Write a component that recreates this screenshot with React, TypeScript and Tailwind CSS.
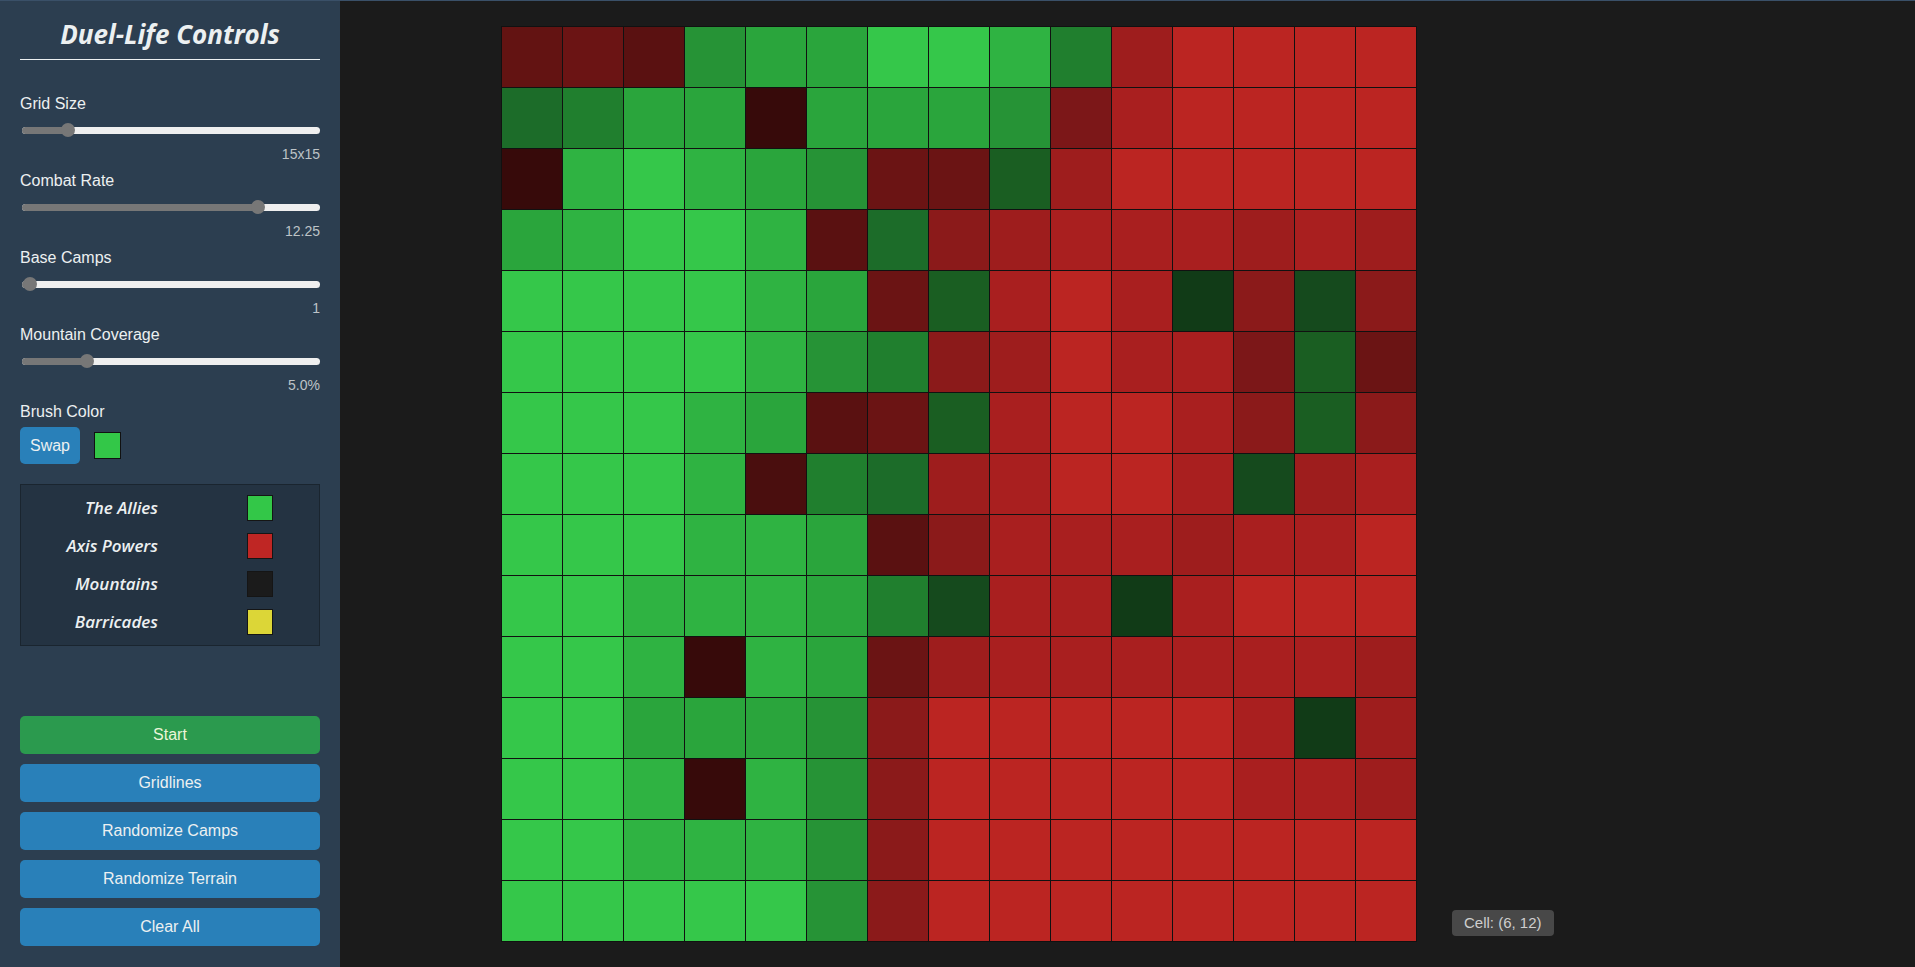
import React from "react";

// palette: upper case = allies (green shades), lower case = axis (red shades)
const P: Record<string, string> = {
  A: "#35c74a",
  B: "#2fb342",
  C: "#2aa53c",
  D: "#269336",
  E: "#207f2e",
  F: "#1c6c29",
  G: "#1a5e22",
  H: "#154a1d",
  I: "#113b17",
  a: "#bb2522",
  b: "#a91f1f",
  c: "#9e1d1d",
  d: "#8b1a1a",
  e: "#7c1718",
  f: "#6b1414",
  g: "#5a1111",
  h: "#4a0e0e",
  i: "#370a0a",
  j: "#631312",
};

const ROWS = [
  "jfgDCCAABEcaaaa",
  "FECCiCCCDebaaaa",
  "iBABCDffGcaaaaa",
  "CBAABgFdcbbbcbc",
  "AAAABCfGbabIdHd",
  "AAAABDEdcabbeGf",
  "AAABCgfGbaabdGd",
  "AAABhEFcbaabHcb",
  "AAABBCgdbbbcbba",
  "AABBBCEHbbIbaaa",
  "AABiBCfcbbbbbbc",
  "AACCCDdaaaaabIc",
  "AABiBDdaaaaabbc",
  "AABBBDdaaaaaaaa",
  "AAAAADdaaaaaaaa",
];

const SLIDERS = [
  { label: "Grid Size", value: "15x15", thumb: 39 },
  { label: "Combat Rate", value: "12.25", thumb: 229 },
  { label: "Base Camps", value: "1", thumb: 1 },
  { label: "Mountain Coverage", value: "5.0%", thumb: 58 },
];

const LEGEND = [
  { name: "The Allies", color: "bg-[#33c748]" },
  { name: "Axis Powers", color: "bg-[#bf2624]" },
  { name: "Mountains", color: "bg-[#1b1b1b]" },
  { name: "Barricades", color: "bg-[#dcd637]" },
];

const BUTTONS = ["Gridlines", "Randomize Camps", "Randomize Terrain", "Clear All"];

function Slider({ thumb }: { thumb: number }) {
  return (
    <div className="relative ml-[2px] flex h-[14px] items-center">
      <div className="h-[7px] w-full rounded-full bg-[#efefef]" />
      <div
        className="absolute left-0 h-[7px] rounded-full bg-[#777]"
        style={{ width: thumb + 7 }}
      />
      <div
        className="absolute top-0 h-[14px] w-[14px] rounded-full bg-[#777]"
        style={{ left: thumb }}
      />
    </div>
  );
}

export default function App() {
  return (
    <div className="flex h-screen w-full overflow-hidden border-t border-[#3a5068] bg-[#1b1b1b] font-['Liberation_Sans',Arial,sans-serif]">
      <aside className="flex w-[340px] shrink-0 flex-col bg-[#2c3e50] px-5 pb-[21px] pt-5 text-[#ecf0f1]">
        <h2 className="border-b border-[#ecf0f1] pb-[12px] text-center font-['Open_Sans',sans-serif] text-[26px] font-bold italic leading-[26px]">
          Duel-Life Controls
        </h2>

        <div className="mt-[35px] flex flex-col gap-[10px]">
          {SLIDERS.map((s) => (
            <div key={s.label} className="flex flex-col gap-[10px]">
              <div className="text-[16px] leading-[18px]">{s.label}</div>
              <Slider thumb={s.thumb} />
              <div className="text-right text-[14px] leading-[15px] text-[#bdc3c7]">{s.value}</div>
            </div>
          ))}

          <div className="text-[16px] leading-[18px]">Brush Color</div>
        </div>

        <div className="mt-[6px] flex items-center gap-[14px]">
          <button className="h-[37px] w-[60px] rounded-[5px] bg-[#2980b9] text-[16px] text-[#ecf0f1]">
            Swap
          </button>
          <div className="h-[27px] w-[27px] border border-[#111] bg-[#33c748]" />
        </div>

        <div className="mt-[20px] flex flex-col border border-[#1a252f] bg-[#243342] py-[4px]">
          {LEGEND.map((l) => (
            <div key={l.name} className="flex h-[38px] items-center">
              <div className="w-[137px] text-right font-['Open_Sans',sans-serif] text-[17px] font-semibold italic">
                {l.name}
              </div>
              <div className={`ml-[89px] h-[26px] w-[26px] border border-[#151515] ${l.color}`} />
            </div>
          ))}
        </div>

        <div className="mt-auto flex flex-col gap-[10px]">
          <button className="h-[38px] w-full rounded-[5px] bg-[#2b9a4e] text-[16px] text-[#eaf5d8]">
            Start
          </button>
          {BUTTONS.map((b) => (
            <button
              key={b}
              className="h-[38px] w-full rounded-[5px] bg-[#2980b9] text-[16px] text-[#ecf0f1]"
            >
              {b}
            </button>
          ))}
        </div>
      </aside>

      <main className="flex flex-1 items-center justify-center pr-[337px]">
        <div className="relative">
          <div className="grid grid-cols-[repeat(15,60px)] gap-px bg-[#111] p-px">
            {ROWS.map((row, r) =>
              row.split("").map((k, c) => (
                <div key={`${r}-${c}`} className="h-[60px] w-[60px]" style={{ backgroundColor: P[k] }} />
              ))
            )}
          </div>
          <div className="absolute bottom-[6px] left-full ml-[35px] whitespace-nowrap rounded-[4px] bg-[#484848] px-[12px] py-[4px] text-[15px] leading-[18px] text-[#cfcfcf]">
            Cell: (6, 12)
          </div>
        </div>
      </main>
    </div>
  );
}
